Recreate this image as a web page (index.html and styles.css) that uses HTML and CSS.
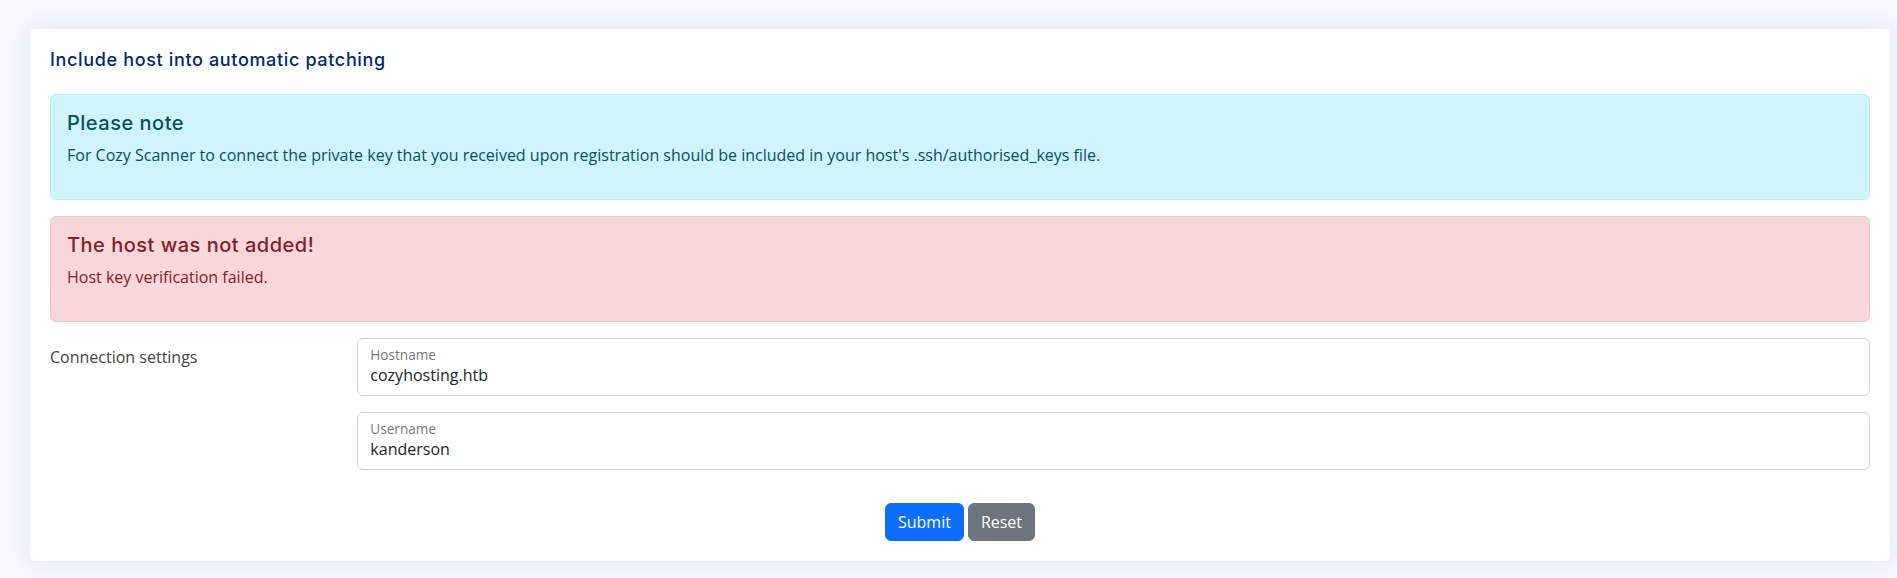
FILE: index.html
```html
<!DOCTYPE html>
<html lang="en">
<head>
<meta charset="utf-8">
<title>Include host into automatic patching</title>
<link rel="stylesheet" href="styles.css">
</head>
<body>
<main class="main">
  <section class="card">
    <div class="card-body">
      <h5 class="card-title">Include host into automatic patching</h5>

      <div class="alert alert-info">
        <h4 class="alert-heading">Please note</h4>
        <p>For Cozy Scanner to connect the private key that you received upon registration should be included in your host's .ssh/authorised_keys file.</p>
      </div>

      <div class="alert alert-danger">
        <h4 class="alert-heading">The host was not added!</h4>
        <p>Host key verification failed.</p>
      </div>

      <form class="form">
        <div class="form-row">
          <label class="col-label">Connection settings</label>
          <div class="fields">
            <div class="field">
              <label class="field-label" for="host">Hostname</label>
              <input class="field-input" id="host" type="text" value="cozyhosting.htb">
            </div>
            <div class="field">
              <label class="field-label" for="user">Username</label>
              <input class="field-input" id="user" type="text" value="kanderson">
            </div>
          </div>
        </div>
        <div class="actions">
          <button type="submit" class="btn btn-primary">Submit</button>
          <button type="reset" class="btn btn-secondary">Reset</button>
        </div>
      </form>
    </div>
  </section>
</main>
</body>
</html>
```

FILE: styles.css
```css
* { box-sizing: border-box; }

html, body {
  margin: 0;
  padding: 0;
}

body {
  background: #f6f9ff;
  font-family: "Open Sans", "Noto Sans", sans-serif;
  font-size: 16px;
  line-height: 1.5;
  color: #444444;
  width: 1897px;
  height: 578px;
  overflow: hidden;
}

.main {
  padding: 29px 7px 19px 30px;
}

.card {
  background: #ffffff;
  border-radius: 5px;
  box-shadow: 0 0 30px rgba(1, 41, 112, 0.1);
}

.card-body {
  padding: 0 20px 20px 20px;
}

.card-title {
  margin: 0 0 8px 0;
  padding: 20px 0 15px 0;
  font-family: "Inter", "Noto Sans", sans-serif;
  font-size: 18px;
  font-weight: 500;
  letter-spacing: 0.65px;
  line-height: 22px;
  color: #012970;
}

.alert {
  border: 1px solid transparent;
  border-radius: 6px;
  padding: 16px;
  margin-bottom: 16px;
}

.alert-info {
  background: #cff4fc;
  border-color: #b6effb;
  color: #055160;
}

.alert-danger {
  background: #f8d7da;
  border-color: #f5c2c7;
  color: #842029;
}

.alert-heading {
  margin: 0 0 8px 0;
  font-family: "Inter", "Noto Sans", sans-serif;
  font-size: 20px;
  font-weight: 500;
  letter-spacing: 0.5px;
  line-height: 24px;
  color: inherit;
}

.alert p {
  margin: 0 0 16px 0;
  font-size: 16px;
  line-height: 24px;
}

.form-row {
  display: grid;
  grid-template-columns: 2fr 10fr;
  margin: 0 -12px 33px -12px;
}

.col-label {
  padding: 7px 12px 0 12px;
  font-size: 16px;
  line-height: 24px;
  color: #444444;
}

.fields {
  display: flex;
  flex-direction: column;
  gap: 16px;
  padding: 0 12px;
}

.field {
  display: flex;
  flex-direction: column;
  height: 58px;
  border: 1px solid #ced4da;
  border-radius: 6px;
  padding: 8px 12px 8px 12px;
  background: #ffffff;
}

.field-label {
  font-size: 13.6px;
  line-height: 16px;
  color: rgba(33, 37, 41, 0.65);
}

.field-input {
  border: none;
  outline: none;
  padding: 0;
  margin: 0;
  height: 24px;
  font-family: "Open Sans", "Noto Sans", sans-serif;
  font-size: 16px;
  line-height: 24px;
  color: #212529;
  background: transparent;
}

.actions {
  display: flex;
  justify-content: center;
  gap: 4px;
}

.btn {
  font-family: "Open Sans", "Noto Sans", sans-serif;
  font-size: 16px;
  line-height: 24px;
  padding: 6px 12px;
  border: 1px solid transparent;
  border-radius: 6px;
  color: #ffffff;
  cursor: pointer;
}

.btn-primary {
  background: #0d6efd;
  border-color: #0d6efd;
}

.btn-secondary {
  background: #6c757d;
  border-color: #6c757d;
}
```
